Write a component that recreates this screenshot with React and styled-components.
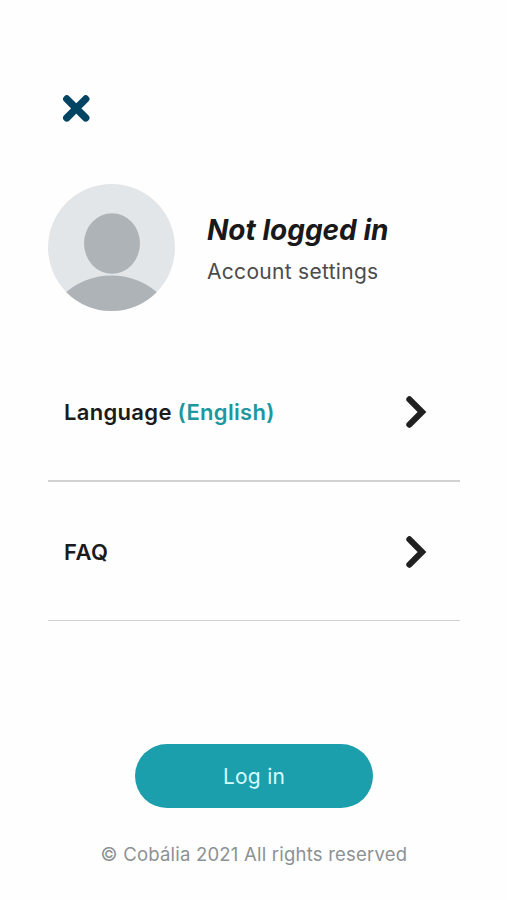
import React from "react";
import styled, { createGlobalStyle } from "styled-components";

const App = () => {
  return (
    <>
      <GlobalStyle />
      <Container>
        {/* close button */}
        <CloseButton aria-label="Close">
          <svg width="28" height="28" viewBox="0 0 28 28">
            <path d="M4.8 5L23.7 23.9M23.7 5L4.8 23.9" stroke="#034463" strokeWidth="7.4" strokeLinecap="round" />
          </svg>
        </CloseButton>

        {/* profile */}
        <Profile>
          <Avatar />
          <ProfileText>
            <Title>Not logged in</Title>
            <Subtitle>Account settings</Subtitle>
          </ProfileText>
        </Profile>

        {/* settings */}
        <Menu>
          <MenuRow $line="2px" $top="1px">
            <Label $spacing="0.32px">
              Language <Accent>(English)</Accent>
            </Label>
            <Chevron />
          </MenuRow>
          <MenuRow $line="1px" $top="2px">
            <Label $spacing="0.5px">FAQ</Label>
            <Chevron />
          </MenuRow>
        </Menu>

        <LoginButton>Log in</LoginButton>
        <Footer>© Cobália 2021 All rights reserved</Footer>
      </Container>
    </>
  );
};

const Avatar = () => (
  <AvatarIcon viewBox="0 0 127 127">
    <defs>
      <clipPath id="avatar">
        <circle cx="63.5" cy="63.5" r="63.5" />
      </clipPath>
    </defs>
    <g clipPath="url(#avatar)">
      <rect width="127" height="127" fill="#e3e6e9" />
      <ellipse cx="64" cy="59.5" rx="28" ry="30.3" fill="#aeb3b7" />
      <circle cx="63.5" cy="161.5" r="70" fill="#aeb3b7" />
    </g>
  </AvatarIcon>
);

const Chevron = () => (
  <svg width="22" height="34" viewBox="0 0 22 34">
    <path
      d="M4.4 4.4L17 17L4.4 29.6"
      fill="none"
      stroke="#202020"
      strokeWidth="6.2"
      strokeLinecap="round"
      strokeLinejoin="miter"
    />
  </svg>
);

export default App;

const GlobalStyle = createGlobalStyle`
  * {
    box-sizing: border-box;
  }
  body {
    margin: 0;
    background-color: #fefefe;
    font-family: Inter, "Liberation Sans", sans-serif;
  }
`;

const Container = styled.div`
  height: 900px;
  width: 507px;
  padding: 94px 47px 0 48px;
  display: flex;
  flex-direction: column;
`;

const CloseButton = styled.button`
  display: flex;
  align-self: flex-start;
  margin-left: 14px;
  padding: 0;
  border: none;
  background: none;
`;

const Profile = styled.div`
  display: flex;
  height: 127px;
  margin-top: 62px;
`;

const AvatarIcon = styled.svg`
  width: 127px;
  height: 127px;
  flex-shrink: 0;
`;

const ProfileText = styled.div`
  margin-left: 32px;
  padding-top: 28px;
  white-space: nowrap;
`;

const Title = styled.h1`
  margin: 0;
  color: #191919;
  font-size: 28px;
  font-style: italic;
  font-weight: 700;
  line-height: 36px;
`;

const Subtitle = styled.p`
  margin: 10px 0 0;
  color: #4b4b4c;
  font-size: 21px;
  letter-spacing: 0.3px;
  line-height: 28px;
`;

const Menu = styled.div`
  margin-top: 32px;
`;

const MenuRow = styled.div`
  display: flex;
  align-items: center;
  justify-content: space-between;
  height: 139px;
  padding: ${(props) => props.$top} 33px 0 16px;
  border-bottom: ${(props) => props.$line} solid #cfd1d3;
`;

const Label = styled.span`
  color: #1b1b1b;
  font-size: 22px;
  font-weight: 600;
  letter-spacing: ${(props) => props.$spacing};
`;

const Accent = styled.span`
  color: #20969f;
`;

const LoginButton = styled.button`
  align-self: center;
  height: 64px;
  width: 238px;
  margin-top: 123px;
  border: none;
  border-radius: 32px;
  background-color: #1c9fac;
  color: #d4fbff;
  font-family: inherit;
  font-size: 21px;
  letter-spacing: 0.25px;
`;

const Footer = styled.p`
  margin: 32px 0 0;
  color: #8c9194;
  font-size: 18.5px;
  letter-spacing: 0.22px;
  line-height: 28px;
  text-align: center;
  white-space: nowrap;
`;
